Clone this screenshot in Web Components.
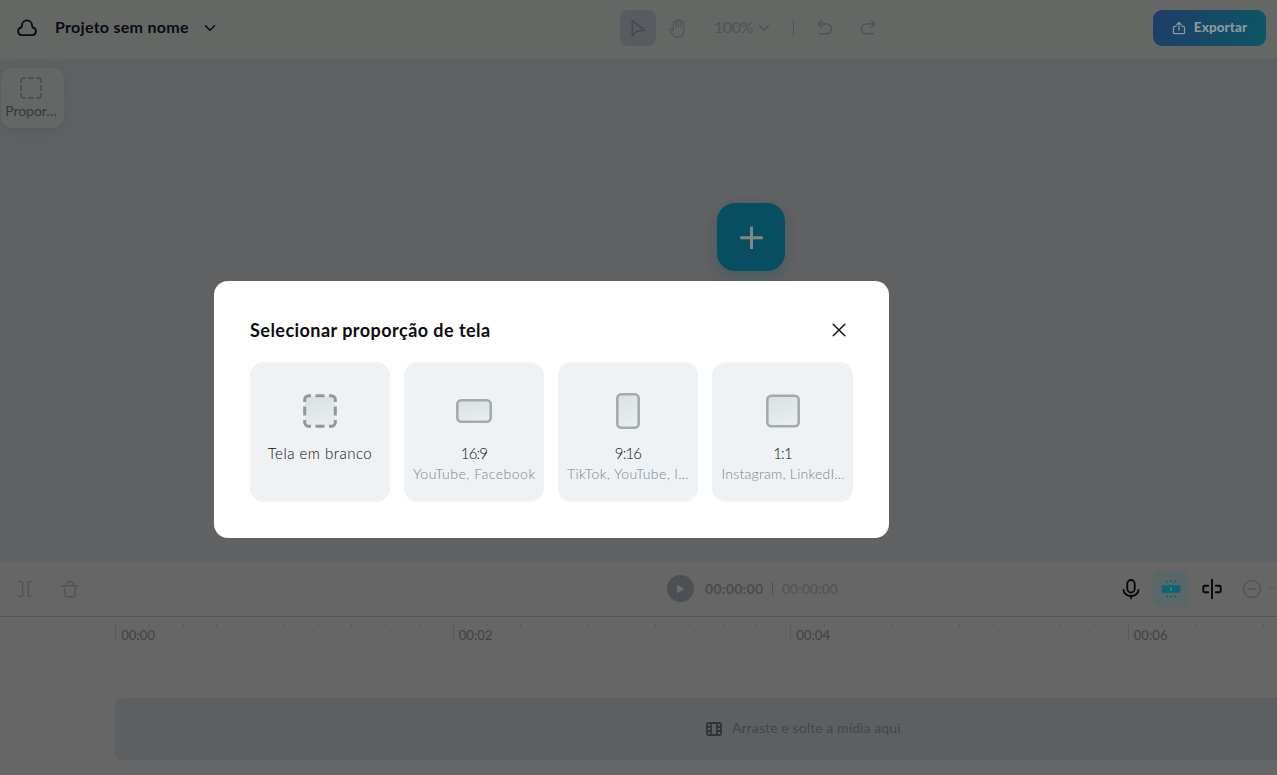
<!DOCTYPE html>
<html lang="pt-BR">
<head>
<meta charset="utf-8">
<title>Projeto sem nome</title>
<style>
html,body{margin:0;height:100%;overflow:hidden;background:#666}
body{font-family:Lato,"Open Sans",sans-serif;font-size:14px;color:#101318}
</style>
</head>
<body>
<video-editor></video-editor>
<script>
const define = (name, html, setup) => customElements.define(name, class extends HTMLElement {
  constructor() {
    super();
    const t = document.createElement('template');
    t.innerHTML = html;
    this.attachShadow({mode: 'open'}).append(t.content.cloneNode(true));
  }
  connectedCallback() { if (setup) setup(this, this.shadowRoot); }
});

const icons = {
  cloud: [22, 22, '<path d="M6.200 18.200h-.4a3.900 3.900 0 0 1-.6-7.700C5.800 9.900 6 9.300 6 8.300a5 5 0 0 1 10 0c0 1 .2 1.600.8 2.200a3.900 3.900 0 0 1-.6 7.700z"/>', 1.8],
  chevron: [12, 12, '<path d="M1.500 3.800 6 8.300l4.500-4.500"/>', 1.500],
  pointer: [18, 20, '<path d="M3.300 2.400v15.200l4.700-4.600 7.600-.6z"/>', 1.500],
  hand: [20, 22, '<path d="M5.300 13.500V6a1.300 1.300 0 0 1 2.600 0v4-5.800a1.300 1.300 0 0 1 2.600 0V10 4a1.300 1.300 0 0 1 2.600 0v6-4.200a1.300 1.300 0 0 1 2.600 0v8.400c0 3.600-2.400 6-6 6-3.200 0-5-1.800-6.200-4.200l-1.700-2.800c-.7-1.400 1-2.300 2-1.400z"/>', 1.200],
  undo: [18, 18, '<path d="M5.600 1.700 2.300 5l3.300 3.400M2.700 5h8a4.900 4.900 0 0 1 0 9.800H3.400"/>', 1.400],
  redo: [18, 18, '<path d="m12.400 1.700 3.300 3.300-3.300 3.400M15.300 5h-8a4.900 4.900 0 0 0 0 9.800h7.300"/>', 1.400],
  share: [14, 14, '<path d="M4 5.300H2.700c-.7 0-1.200.5-1.200 1.200v5c0 .7.5 1.200 1.200 1.200h8.600c.7 0 1.200-.5 1.200-1.200v-5c0-.7-.5-1.200-1.200-1.200H10M7 9V1.500M4.500 3.900 7 1.400l2.500 2.500"/>', 1.300],
  plus: [24, 24, '<path d="M12.500 1.500v22.500M1.200 12.700h22.600" stroke-linecap="butt"/>', 3],
  close: [14, 14, '<path d="m1.200 1.200 11.600 11.600M12.800 1.200 1.200 12.800"/>', 1.500],
  split: [16, 18, '<path d="M2 1.500h2.500c.8 0 1.200.4 1.200 1.200v12.600c0 .8-.4 1.200-1.200 1.200H2M14.500 1.500h-2c-.8 0-1.200.4-1.200 1.200v12.600c0 .8.4 1.200 1.200 1.200h2"/>', 1.400],
  trash: [18, 18, '<path d="M1 5.800h16M3.200 6l1 9.500c.1.800.6 1.200 1.300 1.200h7c.7 0 1.200-.4 1.300-1.200l1-9.500M5.500 4.200c.4-1.500 1.700-2.700 3.500-2.700s3.100 1.200 3.500 2.700"/>', 1.400],
  mic: [18, 20, '<rect x="5.300" y="1" width="7.400" height="12.500" rx="3.700"/><path d="M1.500 10.800a7.500 6.200 0 0 0 15 0M9 17v2.300"/>', 1.800],
  cut: [20, 20, '<path d="M10 .8v18.400M6.200 6.800H2.500c-.8 0-1.200.4-1.200 1.200v4c0 .8.400 1.200 1.200 1.200h3.700M13.800 6.800h3.700c.8 0 1.200.4 1.200 1.200v4c0 .8-.4 1.200-1.200 1.200h-3.700"/>', 1.900],
  minus: [20, 20, '<circle cx="10" cy="10" r="8.500"/><path d="M6.200 10h7.600"/>', 1.400],
  snap: [20, 20, '<path d="M2.300 6.200h15.400c1 0 1.700.5 1.700 1.300v5c0 .8-.7 1.300-1.700 1.300H2.300c-1 0-1.700-.5-1.700-1.300v-5c0-.8.700-1.300 1.700-1.300z" fill="currentColor" stroke="none"/><path d="M10 1.300v1.500M5.800 2.200l.6 1M14.200 2.200l-.6 1M10 17.200v1.500M5.800 17.800l.6-1M14.200 17.800l-.6-1"/><path d="M10 8.700v2.600" stroke="#4c7f85"/>', 1.500],
  film: [16, 14, '<rect x="1" y="1" width="14" height="12" rx="1.200"/><path d="M5 1v12M11 1v12M1 5h4M1 9h4M11 5h4M11 9h4"/>', 1.800],
  play: [8, 10, '<path d="M0 .8 7.500 5 0 9.200z" fill="currentColor" stroke="none"/>', 1],
  dashed: [20, 20, '<path d="M0 4.200V2.800A2.800 2.800 0 0 1 2.800 0h1.400M7.500 0h5M15.800 0h1.400A2.800 2.800 0 0 1 20 2.800v1.400M20 7.500v5M20 15.800v1.400a2.800 2.800 0 0 1-2.800 2.800h-1.400M12.500 20h-5M4.200 20H2.800A2.800 2.800 0 0 1 0 17.200v-1.400M0 12.500v-5"/>', 1.400]
};
define('ui-icon', '<style>:host{display:block;flex:none;line-height:0}svg{display:block;overflow:visible}</style>', (host, root) => {
  const [w, h, body, sw] = icons[host.getAttribute('name')];
  root.innerHTML += `<svg width="${w}" height="${h}" viewBox="0 0 ${w} ${h}" fill="none" stroke="currentColor" stroke-width="${sw}" stroke-linecap="round" stroke-linejoin="round">${body}</svg>`;
});

define('tool-button', `<style>
:host{display:flex;align-items:center;justify-content:center;width:36px;height:36px;border-radius:8px;flex:none}
</style><slot></slot>`);

define('top-bar', `<style>
:host{display:flex;align-items:center;height:59px;box-sizing:border-box;padding:0 11px 3px 16px;background:#656765;color:#494c50}
.name{color:#080b13;font-weight:700;font-size:16px;letter-spacing:.28px;line-height:20px;width:134px;flex:none;white-space:nowrap;margin:0 15px 3px 17px}
.dark{color:#080b10}
.tools{display:flex;flex:none;align-items:center;margin-left:404px;color:#505357}
.active{background:#595b60;color:#46484d}
.zoom{font-size:16px;line-height:20px;width:38px;margin:0 6px 3px 18px;letter-spacing:-.45px}
.sep{width:1px;height:16px;background:#505355;margin:0 13px 0 23px}
.export{display:flex;flex:none;align-items:center;justify-content:center;width:113px;height:36px;border-radius:9px;margin-left:auto;background:linear-gradient(110deg,#1e3e68,#0d5663);color:#8d989e;font-weight:900;font-size:13.500px;gap:8px}
.export span{letter-spacing:.08px;line-height:18px;margin-bottom:2px}
</style>
<ui-icon class="dark" name="cloud"></ui-icon><span class="name">Projeto sem nome</span><ui-icon class="dark" name="chevron"></ui-icon>
<div class="tools"><tool-button class="active"><ui-icon name="pointer"></ui-icon></tool-button>
<tool-button style="margin-left:4px"><ui-icon name="hand"></ui-icon></tool-button>
<span class="zoom">100%</span><ui-icon name="chevron"></ui-icon><i class="sep"></i>
<tool-button><ui-icon name="undo"></ui-icon></tool-button><tool-button style="margin-left:7px"><ui-icon name="redo"></ui-icon></tool-button></div>
<div class="export"><ui-icon name="share"></ui-icon><span>Exportar</span></div>`);

define('preview-canvas', `<style>
:host{display:flex;align-items:flex-start;background:#5f6163;min-height:0;box-sizing:border-box;padding:9px 0 0 1px}
.ratio{display:flex;flex-direction:column;align-items:center;gap:4px;width:63px;height:60px;box-sizing:border-box;padding:10px 3px 0 0;border-radius:11px;background:#656766;color:#36383c;box-shadow:0 4px 16px rgba(0,0,0,.07);font-size:14px}
.ratio ui-icon{color:#45474b}
.ratio span{letter-spacing:-.02px;line-height:17px}
.add{display:flex;align-items:center;justify-content:center;width:68px;height:68px;border-radius:18px;background:#074f60;color:#7f8788;margin:135px 0 0 653px;box-shadow:0 5px 12px rgba(7,79,96,.25)}
</style><div class="ratio"><ui-icon name="dashed"></ui-icon><span>Propor…</span></div><div class="add"><ui-icon name="plus"></ui-icon></div>`);

define('time-ruler', `<style>
:host{display:flex;align-items:flex-start;padding:5px 0 0 115.200px;height:76px;overflow:hidden}
i{flex:none;box-sizing:border-box;width:33.750px;height:5px;border-left:1px solid #595b5d;color:#3f4246;font-style:normal;white-space:nowrap;font-size:13px;letter-spacing:.1px}
i.major{height:20px;padding:5px 0 0 5px;line-height:17px}
</style>`, (host, root) => {
  for (let n = 0; n < 35; n++) {
    const tick = document.createElement('i');
    if (n % 10 === 0) { tick.className = 'major'; tick.textContent = '00:0' + n / 5; }
    root.append(tick);
  }
});

define('time-line', `<style>
:host{display:flex;flex-direction:column;background:#666;min-height:0;min-width:0;overflow:hidden}
.bar{display:flex;align-items:center;height:55px;border-bottom:1px solid #535456;box-sizing:content-box;padding-left:17px;color:#515357}
.bar>*{flex:none}
.play{display:flex;align-items:center;justify-content:center;width:27px;height:27px;border-radius:50%;background:#4c4f53;color:#6b6d70;margin-left:588px}
.now{color:#484b50;font-weight:700;margin-left:11px;width:59px;letter-spacing:.3px}
.total{margin-left:9px;width:57px;color:#505255}
.sep{width:1px;height:13px;background:#4c4f52;margin-left:8px}
.right{display:flex;align-items:center;margin-left:274px;color:#05070a}
.snap{background:#5a6769;color:#0a6672;margin:0 4px}
.min{color:#525457}
.rail{width:8px;height:1px;background:#55575a;margin-left:-2px}
.track{display:flex;align-items:center;margin-left:115px;height:62px;padding-left:591px;border-radius:7px 0 0 7px;background:#5d6062;color:#43464a;gap:10px}
.track ui-icon{color:#313439}
.track span{letter-spacing:.1px;line-height:18px;margin-bottom:3px}
</style>
<div class="bar"><ui-icon name="split"></ui-icon><ui-icon name="trash" style="margin-left:28px"></ui-icon>
<div class="play"><ui-icon name="play"></ui-icon></div><span class="now">00:00:00</span><i class="sep"></i><span class="total">00:00:00</span>
<div class="right"><tool-button><ui-icon name="mic"></ui-icon></tool-button><tool-button class="snap"><ui-icon name="snap"></ui-icon></tool-button><tool-button style="margin-left:1px"><ui-icon name="cut"></ui-icon></tool-button><tool-button class="min" style="margin-left:4px"><ui-icon name="minus"></ui-icon></tool-button><i class="rail"></i></div></div>
<time-ruler></time-ruler>
<div class="track"><ui-icon name="film"></ui-icon><span>Arraste e solte a mídia aqui</span></div>`);

define('ratio-card', `<style>
:host{display:flex;flex-direction:column;align-items:center;width:140px;height:140px;box-sizing:border-box;padding:29px 9px 0;border-radius:14px;background:#eef2f5}
svg{display:block;flex:none}
b{font-weight:300;font-size:15px;line-height:20px;margin-top:12px;margin-bottom:1px;color:#0c0e12;letter-spacing:-.8px}
:host([blank]) b{letter-spacing:.5px}
small{font-weight:300;font-size:14px;line-height:20px;color:#7b848c;width:122px;text-align:center;white-space:nowrap;letter-spacing:var(--track,.5px)}
</style>
<svg width="40" height="40" viewBox="0 0 40 40"><defs><linearGradient id="g" x1="0" y1="0" x2=".3" y2="1"><stop stop-color="#d9e0e3"/><stop offset="1" stop-color="#e7edef"/></linearGradient></defs><g class="shape" fill="url(#g)" stroke="#a4aaae" stroke-width="2.600"></g></svg>
<b><slot name="label"></slot></b><small><slot></slot></small>`, (host, root) => {
  const w = +host.getAttribute('w'), h = +host.getAttribute('h');
  const x = 20 - w / 2, y = 20 - h / 2;
  root.querySelector('.shape').innerHTML = host.hasAttribute('blank')
    ? '<rect x="5" y="5" width="30" height="30" rx="4" stroke="none"/><path stroke="#92979b" stroke-width="3" fill="none" d="M4.700 11V8.700a4 4 0 0 1 4-4H11M15.500 4.700h9M29 4.700h2.300a4 4 0 0 1 4 4V11M35.300 15.500v9M35.300 29v2.300a4 4 0 0 1-4 4H29M24.500 35.300h-9M11 35.300H8.700a4 4 0 0 1-4-4V29M4.700 24.500v-9"/>'
    : `<rect x="${x + 1.3}" y="${y + 1.3}" width="${w - 2.6}" height="${h - 2.6}" rx="4"/>`;
});

define('ratio-dialog', `<style>
:host{position:absolute;left:214px;top:281px;width:675px;height:257px;box-sizing:border-box;padding:36px;border-radius:14px;background:#fff}
header{display:flex;align-items:center;justify-content:space-between;height:26px;padding-right:7px}
h2{margin:0;font-size:18px;line-height:26px;letter-spacing:.46px;color:#0b0d12;font-weight:700}
.cards{display:flex;gap:14px;margin-top:19px}
.cards ratio-card{flex:none}
</style><header><h2>Selecionar proporção de tela</h2><ui-icon name="close"></ui-icon></header>
<div class="cards">
<ratio-card blank><span slot="label">Tela em branco</span></ratio-card>
<ratio-card w="36" h="24"><span slot="label">16:9</span>YouTube, Facebook</ratio-card>
<ratio-card w="24" h="36" style="--track:.4px"><span slot="label">9:16</span>TikTok, YouTube, I…</ratio-card>
<ratio-card w="34" h="33" style="--track:.25px;width:141px"><span slot="label">1:1</span>Instagram, LinkedI…</ratio-card>
</div>`);

define('video-editor', `<style>
:host{display:grid;grid-template-columns:minmax(0,1fr);grid-template-rows:59px 502px minmax(0,1fr);height:100vh;position:relative;overflow:hidden}
</style><top-bar></top-bar><preview-canvas></preview-canvas><time-line></time-line><ratio-dialog></ratio-dialog>`);
</script>
</body>
</html>
